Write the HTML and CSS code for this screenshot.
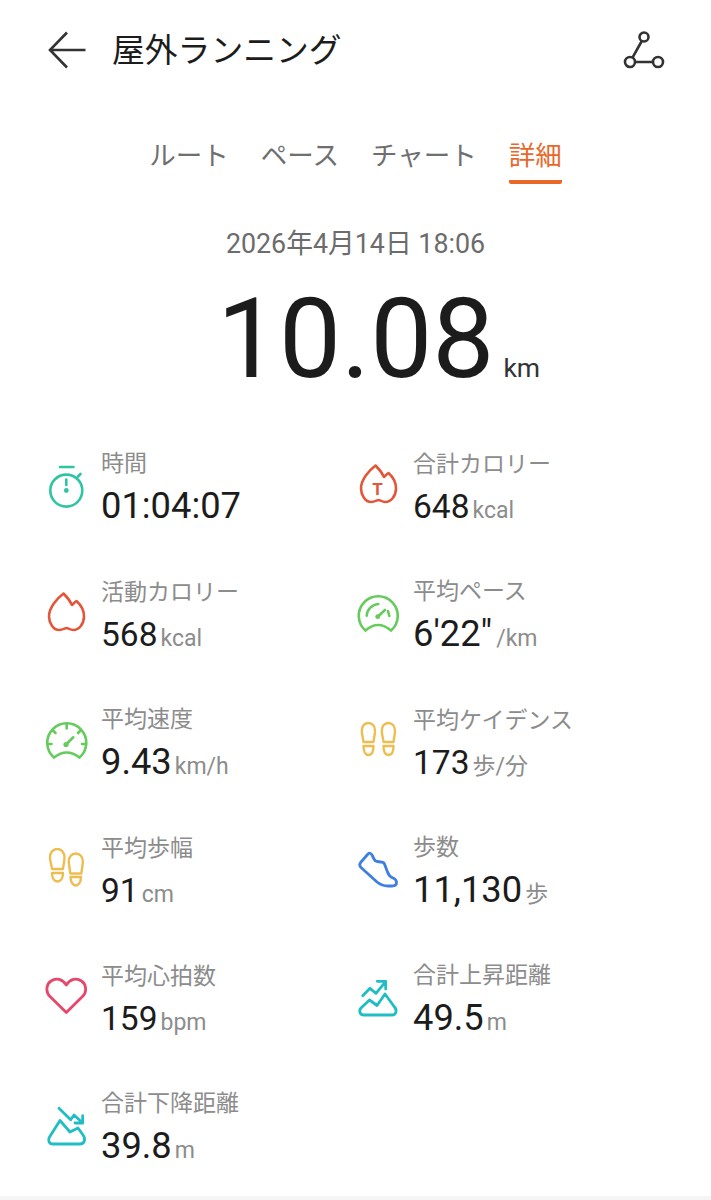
FILE: index.html
```html
<!DOCTYPE html>
<html lang="ja">
<head>
    <meta charset="UTF-8">
    <meta name="viewport" content="width=device-width, initial-scale=1.0">
    <title>屋外ランニング</title>
    <link rel="stylesheet" href="styles.css">
</head>
<body>
    <div class="page">
        <header class="topbar">
            <svg class="back-icon" width="38" height="38" viewBox="0 0 38 38" fill="none" stroke="#333" stroke-width="2.6">
                <path d="M19 1.500L2 19L19 36.500M2 19H37.500"/>
            </svg>
            <h1 class="title">屋外ランニング</h1>
            <svg class="route-icon" width="42" height="38" viewBox="0 0 42 38" fill="none" stroke="#333" stroke-width="2.6">
                <circle cx="21" cy="6" r="4.500"/>
                <circle cx="7" cy="31" r="5"/>
                <circle cx="35" cy="31" r="5"/>
                <path d="M18.800 10L9.500 26.700M12 31H30"/>
            </svg>
        </header>

        <nav class="tabs">
            <div class="tab">ルート</div>
            <div class="tab">ペース</div>
            <div class="tab">チャート</div>
            <div class="tab active">詳細</div>
        </nav>

        <div class="date">2026年4月14日 18:06</div>

        <div class="distance">
            <span class="distance-num">10.08</span>
            <span class="distance-unit">km</span>
        </div>

        <div class="stats">
            <div class="stat">
                <svg class="icon" viewBox="0 0 44 44" fill="none" stroke="#2fc5a2" stroke-width="2.600" stroke-linecap="round">
                    <circle cx="21.300" cy="26.600" r="16"/>
                    <path d="M15 3H28.500M33 12.500L35.500 10M21.300 15.500V21"/>
                    <circle cx="21.300" cy="26.500" r="2.400" fill="#2fc5a2" stroke="none"/>
                </svg>
                <div class="stat-text">
                    <div class="label">時間</div>
                    <div class="value"><span class="num">01:04:07</span></div>
                </div>
            </div>
            <div class="stat">
                <svg class="icon" viewBox="0 0 44 44" fill="none" stroke="#e2573a" stroke-width="2.600" stroke-linejoin="round">
                    <path d="M18.500 1.500C20.500 3.500 24.500 7.500 27 13C28.500 11.500 30 10 31.500 9C36 13 39 18 39 24.500C39 32 34 38 28.500 38C25 38 23 36 21.500 36C20 36 18 38 14 38C8.500 38 4 31 4 24.500C4 15.500 12 6.500 18.500 1.500Z"/>
                    <text class="icon-t" x="20.500" y="30.500" fill="#e2573a" stroke="none" text-anchor="middle">T</text>
                </svg>
                <div class="stat-text">
                    <div class="label">合計カロリー</div>
                    <div class="value"><span class="num small">648</span><span class="unit">kcal</span></div>
                </div>
            </div>

            <div class="stat">
                <svg class="icon" viewBox="0 0 44 44" fill="none" stroke="#e2573a" stroke-width="2.600" stroke-linejoin="round">
                    <path d="M18.500 1.500C20.500 3.500 24.500 7.500 27 13C28.500 11.500 30 10 31.500 9C36 13 39 18 39 24.500C39 32 34 38 28.500 38C25 38 23 36 21.500 36C20 36 18 38 14 38C8.500 38 4 31 4 24.500C4 15.500 12 6.500 18.500 1.500Z"/>
                </svg>
                <div class="stat-text">
                    <div class="label">活動カロリー</div>
                    <div class="value"><span class="num small">568</span><span class="unit">kcal</span></div>
                </div>
            </div>
            <div class="stat">
                <svg class="icon" viewBox="0 0 44 44" fill="none" stroke="#65cb5c" stroke-width="2.600" stroke-linecap="round">
                    <path d="M8.500 38.500A19.500 19.500 0 1 1 34 38.500Q21 27.500 8.500 38.500Z"/>
                    <path d="M9.700 23.700A12.500 12.500 0 0 1 21.300 12M31 19L32.300 24M20.700 24.700L28 18"/>
                    <circle cx="20.700" cy="24.700" r="2.400" fill="#65cb5c" stroke="none"/>
                </svg>
                <div class="stat-text">
                    <div class="label">平均ペース</div>
                    <div class="value"><span class="num">6'22"</span><span class="unit unit-wide">/km</span></div>
                </div>
            </div>

            <div class="stat">
                <svg class="icon" viewBox="0 0 44 44" fill="none" stroke="#65cb5c" stroke-width="2.600" stroke-linecap="round">
                    <path d="M9 37.500A19.500 19.500 0 1 1 34.500 37.500Q21.700 27.500 9 37.500Z"/>
                    <path d="M21.700 4.500V8.500M8 10.500L10.500 13M35.500 10.500L33 13M2.500 24H6.500M37 24H41M21 24.500L28.300 17.300"/>
                    <circle cx="21" cy="24.500" r="2.600" fill="#65cb5c" stroke="none"/>
                </svg>
                <div class="stat-text">
                    <div class="label">平均速度</div>
                    <div class="value"><span class="num">9.43</span><span class="unit">km/h</span></div>
                </div>
            </div>
            <div class="stat">
                <svg class="icon" viewBox="0 0 44 44" fill="none" stroke="#eebd50" stroke-width="2.400" stroke-linejoin="round">
                    <path d="M11.300 3C15.500 3 18 6.500 18 11C18 15 17 17 16.500 22H6.500C6 17 4.800 15 4.800 11C4.800 6.500 7 3 11.300 3Z"/>
                    <path d="M6.500 26H16.500C16.500 31.500 14.500 35 11.500 35C8.500 35 6.500 31.500 6.500 26Z"/>
                    <path d="M31.300 3C35.500 3 38 6.500 38 11C38 15 37 17 36.500 22H26.500C26 17 24.800 15 24.800 11C24.800 6.500 27 3 31.300 3Z"/>
                    <path d="M26.500 26H36.500C36.500 31.500 34.500 35 31.500 35C28.500 35 26.500 31.500 26.500 26Z"/>
                </svg>
                <div class="stat-text">
                    <div class="label">平均ケイデンス</div>
                    <div class="value"><span class="num small">173</span><span class="unit">歩/分</span></div>
                </div>
            </div>

            <div class="stat">
                <svg class="icon" viewBox="0 0 44 44" fill="none" stroke="#eebd50" stroke-width="2.400" stroke-linejoin="round">
                    <path d="M12.200 1C16.500 1 19.500 4.500 19.500 9.500C19.500 13.500 18.500 16 18 21H7C6.500 16 5 13.500 5 9.500C5 4.500 8 1 12.200 1Z"/>
                    <path d="M7 25H18C18 30.500 15.500 33.500 12.500 33.500C9.500 33.500 7 30.500 7 25Z"/>
                    <path d="M30.800 5.500C35 5.500 37.800 9 37.800 13.500C37.800 17.500 37 20 36.300 25.500H25.300C24.800 20 23.800 17.500 23.800 13.500C23.800 9 26.500 5.500 30.800 5.500Z"/>
                    <path d="M25.500 29H36C36 34 33.500 37.500 30.800 37.500C28 37.500 25.500 34 25.500 29Z"/>
                </svg>
                <div class="stat-text">
                    <div class="label">平均歩幅</div>
                    <div class="value"><span class="num small">91</span><span class="unit">cm</span></div>
                </div>
            </div>
            <div class="stat">
                <svg class="icon" viewBox="0 0 44 44" fill="none" stroke="#3f7fdf" stroke-width="2.800" stroke-linejoin="round">
                    <path d="M11 6L4 14Q1.500 17 4 19.500L20 34Q25 38 31 38H35Q39.500 38 39.500 34.500Q39.500 31.500 36 30Q32 28.500 30.500 24L27.500 16Q26.500 14 24 14L20 13.500Q18 13 17 11L15 7Q13 4 11 6Z"/>
                </svg>
                <div class="stat-text">
                    <div class="label">歩数</div>
                    <div class="value"><span class="num">11,130</span><span class="unit">歩</span></div>
                </div>
            </div>

            <div class="stat">
                <svg class="icon" viewBox="0 0 44 44" fill="none" stroke="#e5486b" stroke-width="2.800" stroke-linejoin="round">
                    <path d="M21.300 36.500L5 20.500C0 15.500 1.500 8 6 5C11 1.500 17.500 3 21.300 9C25 3 31.500 1.500 36.500 5C41 8 42.500 15.500 37.500 20.500Z"/>
                </svg>
                <div class="stat-text">
                    <div class="label">平均心拍数</div>
                    <div class="value"><span class="num small">159</span><span class="unit">bpm</span></div>
                </div>
            </div>
            <div class="stat">
                <svg class="icon" viewBox="0 0 44 44" fill="none" stroke="#20bdc5" stroke-width="2.800" stroke-linejoin="round" stroke-linecap="round">
                    <path d="M7 39C3 39 1.500 35 4 32L12.500 24L20 29.500L28 18L37.500 31C40.500 34.500 39 39 35 39Z"/>
                    <path d="M5.700 19.700L13 12.300L19 17.300L28 6.300M20.300 5.300H28.700V13"/>
                </svg>
                <div class="stat-text">
                    <div class="label">合計上昇距離</div>
                    <div class="value"><span class="num">49.5</span><span class="unit">m</span></div>
                </div>
            </div>

            <div class="stat">
                <svg class="icon" viewBox="0 0 44 44" fill="none" stroke="#20bdc5" stroke-width="2.800" stroke-linejoin="round" stroke-linecap="round">
                    <path d="M8 40C4 40 2.500 36 4.500 33L15 16.500L25 28L33 24L38 31C41 35 39.500 40 35 40Z"/>
                    <path d="M14 4.300L25.700 15.700L29 11L37.700 19M37.700 11.700V19H30"/>
                </svg>
                <div class="stat-text">
                    <div class="label">合計下降距離</div>
                    <div class="value"><span class="num">39.8</span><span class="unit">m</span></div>
                </div>
            </div>
        </div>

        <div class="bottom-strip"></div>
    </div>
</body>
</html>
```

FILE: styles.css
```css
body {
    margin: 0;
    background-color: #fff;
    font-family: Roboto, "Noto Sans CJK JP", sans-serif;
}
.page {
    height: 1200px;
    display: flex;
    flex-direction: column;
    overflow: hidden;
}
.topbar {
    height: 100px;
    display: flex;
    align-items: center;
    padding: 0 46px 0 48px;
    flex-shrink: 0;
}
.title {
    margin: 0 0 6px 26px;
    font-size: 32.800px;
    font-weight: 400;
    color: #1c1c1c;
    flex: 1;
}
.tabs {
    display: flex;
    justify-content: center;
    gap: 32px;
    margin-top: 34px;
    height: 51px;
}
.tab {
    font-size: 26.500px;
    line-height: 44px;
    color: #6f6f6f;
}
.tab.active {
    color: #e8682c;
    border-bottom: 4px solid #e8682c;
    border-radius: 2px;
    height: 46px;
}
.date {
    margin-top: 39px;
    text-align: center;
    font-size: 26.800px;
    line-height: 42px;
    color: #6c6c6c;
}
.distance {
    display: flex;
    justify-content: center;
    align-items: baseline;
    gap: 9px;
    padding-left: 46px;
    height: 128px;
    margin-top: 10px;
}
.distance-num {
    font-size: 110.500px;
    line-height: 128px;
    color: #1c1c1c;
}
.distance-unit {
    font-size: 26.500px;
    color: #333;
}
.stats {
    display: grid;
    grid-template-columns: 312px 312px;
    grid-auto-rows: 128px;
    padding-left: 45px;
    margin-top: 24.500px;
    flex: 1;
}
.stat {
    display: flex;
    align-items: center;
    gap: 12px;
}
.icon {
    width: 44px;
    height: 44px;
    margin-bottom: 11px;
    flex-shrink: 0;
}
.icon-t {
    font-size: 17px;
    font-weight: 700;
}
.label {
    font-size: 23px;
    line-height: 34px;
    color: #8c8c8c;
}
.value {
    margin-top: 2px;
    line-height: 46px;
    white-space: nowrap;
}
.num {
    font-size: 36.300px;
    color: #1c1c1c;
}
.num.small {
    font-size: 33.500px;
}
.unit {
    font-size: 23px;
    color: #8c8c8c;
    margin-left: 3px;
}
.unit-wide {
    margin-left: 4px;
}
.bottom-strip {
    height: 10px;
    background-color: #f5f5f5;
    flex-shrink: 0;
}
```
